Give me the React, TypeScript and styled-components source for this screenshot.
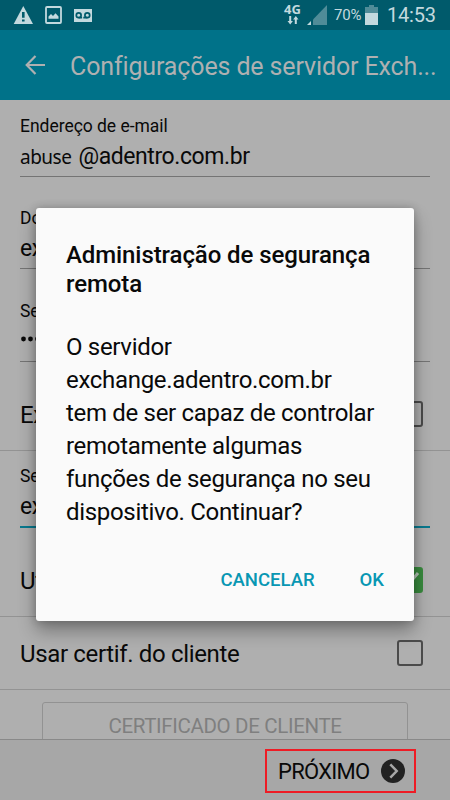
import React from 'react';
import styled, { createGlobalStyle } from 'styled-components';

const GlobalStyle = createGlobalStyle`
  * { box-sizing: border-box; }
  body { margin: 0; background: #afafaf; font-family: Roboto, 'Noto Sans', sans-serif; color: #090909; }
  h1, h2, p { margin: 0; font-weight: 400; }
  button { border: 0; padding: 0; background: none; font: inherit; color: inherit; }
  svg { display: block; flex: none; }
`;

const Screen = styled.div`
  position: relative;
  width: 450px;
  height: 800px;
  overflow: hidden;
  display: flex;
  flex-direction: column;
  background: #afafaf;
`;

const StatusBar = styled.header`
  height: 30px;
  flex: none;
  display: flex;
  justify-content: space-between;
  padding: 0 13px;
  background: #005a6b;
  color: #c3d9de;
`;

const StatusGroup = styled.div<{ $gap: number }>`
  display: flex;
  align-items: center;
  gap: ${(p) => p.$gap}px;
`;

const Network = styled.div`
  width: 17px;
  height: 24px;
  display: flex;
  flex-direction: column;
  align-items: center;
  font: 700 13px/13px 'Noto Sans', sans-serif;
  margin-top: -1px;
`;

const Percent = styled.span`
  width: 27px;
  margin-left: 7px;
  font-size: 15px;
  letter-spacing: -0.2px;
  line-height: 30px;
  white-space: nowrap;
`;

const Clock = styled.span`
  width: 50px;
  margin-left: 9px;
  font-size: 20px;
  letter-spacing: -0.2px;
  line-height: 31px;
  white-space: nowrap;
`;

const AppBar = styled.div`
  height: 70px;
  flex: none;
  display: flex;
  align-items: center;
  padding: 0 13px 0 25px;
  gap: 25px;
  background: #007289;
  color: #afb0b1;
`;

const AppTitle = styled.h1`
  flex: 1;
  font-size: 25px;
  line-height: 36px;
  padding-top: 3px;
  letter-spacing: -0.13px;
  white-space: nowrap;
`;

const Form = styled.main`
  flex: 1;
  min-height: 0;
  overflow: hidden;
`;

const Field = styled.div<{ $height: number; $active?: boolean }>`
  height: ${(p) => p.$height}px;
  margin: 0 20px;
  display: flex;
  flex-direction: column;
  justify-content: flex-end;
  border-bottom: ${(p) => (p.$active ? '2px solid #08798e' : '1px solid #747474')};
`;

const FieldLabel = styled.label`
  font-size: 17.5px;
  line-height: 24px;
  letter-spacing: -0.03px;
  white-space: nowrap;
`;

const FieldValue = styled.div`
  height: 38px;
  display: flex;
  align-items: baseline;
  gap: 7px;
  font-size: 23px;
  line-height: 38px;
  letter-spacing: -0.42px;
  white-space: nowrap;
`;

const MailUser = styled.span`
  font-family: 'Noto Sans', sans-serif;
  font-size: 19px;
  letter-spacing: -0.5px;
`;

const OptionRow = styled.div<{ $height: number; $inset?: number }>`
  height: ${(p) => p.$height}px;
  display: flex;
  align-items: center;
  justify-content: space-between;
  padding: ${(p) => p.$inset ?? 0}px 27px 0 20px;
  border-bottom: 1px solid #939393;
  font-size: 24px;
  letter-spacing: -0.35px;
  white-space: nowrap;
`;

const OptionLabel = styled.span`
  padding-top: 2px;
`;

const CheckBox = styled.span<{ $checked?: boolean }>`
  width: 26px;
  height: 26px;
  display: grid;
  place-items: center;
  border-radius: 3px;
  border: 2px solid ${(p) => (p.$checked ? '#398b3e' : '#4b4b4b')};
  background: ${(p) => (p.$checked ? '#398b3e' : 'transparent')};
`;

const CertificateButton = styled.button`
  display: block;
  width: 366px;
  height: 50px;
  margin: 12px 0 0 42px;
  border: 1px solid #929292;
  border-radius: 3px;
  font-size: 20.5px;
  letter-spacing: -0.35px;
  line-height: 44px;
  padding-bottom: 2px;
  color: #7f7f7f;
`;

const Footer = styled.footer`
  height: 61px;
  flex: none;
  display: flex;
  justify-content: flex-end;
  padding: 9px 34px 0 0;
  border-top: 1px solid #898989;
  background: #a7a7a7;
`;

const NextButton = styled.button`
  width: 151px;
  height: 44px;
  display: flex;
  align-items: center;
  justify-content: space-between;
  padding: 0 9px 0 11px;
  border: 2px solid #ee1c25;
  font-size: 22px;
  letter-spacing: -0.7px;
`;

const Dialog = styled.section`
  position: absolute;
  left: 36px;
  top: 208px;
  width: 378px;
  height: 413px;
  padding: 33px 30px 0;
  border-radius: 3px;
  background: #fafafa;
  box-shadow: 0 10px 18px rgba(0, 0, 0, 0.32), 0 0 9px rgba(0, 0, 0, 0.22);
`;

const DialogTitle = styled.h2`
  font-size: 24px;
  font-weight: 500;
  letter-spacing: -0.09px;
  line-height: 29px;
`;

const DialogText = styled.p`
  margin-top: 32px;
  font-size: 24px;
  letter-spacing: -0.31px;
  line-height: 33px;
  white-space: nowrap;
`;

const DialogActions = styled.div`
  display: flex;
  justify-content: flex-end;
  gap: 45px;
  margin-top: 37px;
`;

const DialogButton = styled.button`
  font-size: 18.5px;
  font-weight: 500;
  line-height: 28px;
  color: #0897b3;
`;

export default function App() {
  return (
    <>
      <GlobalStyle />
      <Screen>
        <StatusBar>
          <StatusGroup $gap={12}>
            <svg width="20" height="18" viewBox="0 0 20 18" fill="#c3d9de">
              <path d="M10.3 0 20 18H.7Z" />
              <path d="M9 6h2.6v5.7H9zM9 13.4h2.6v2.2H9z" fill="#005a6b" />
            </svg>
            <svg width="17" height="18" viewBox="0 0 17 18">
              <rect x="1" y="1" width="15" height="16" rx="1" fill="none" stroke="#c3d9de" strokeWidth="1.8" />
              <path d="M3.5 12.8V10.4L6 8l2 2 2.5-2.8 3 3.3v2.3Z" fill="#c3d9de" />
            </svg>
            <svg width="18" height="13" viewBox="0 0 18 13" fill="none">
              <path d="M0 0h18v13H0z" fill="#c3d9de" />
              <g stroke="#005a6b" strokeWidth="1.7">
                <circle cx="4.7" cy="6.2" r="2.4" />
                <circle cx="13.3" cy="6.2" r="2.4" />
                <path d="M4.7 8.7h3.4M9.3 8.7h4" />
              </g>
            </svg>
          </StatusGroup>
          <StatusGroup $gap={0}>
            <Network>
              4G
              <svg width="12" height="9" viewBox="0 0 12 9" fill="#c3d9de">
                <path d="M2.2 0h2v5h1.7L3.2 8.6.5 5h1.7zM7.8 8V3.5H6.1L8.8 0l2.7 3.5H9.8V8z" />
              </svg>
            </Network>
            <svg width="20" height="21" viewBox="0 0 20 21" style={{ marginLeft: 6 }}>
              <path d="M20 0v20H6V14.5Z" fill="#508c98" />
              <path d="M4 16v4H0Z" fill="#c3d9de" />
            </svg>
            <Percent>70%</Percent>
            <svg width="13" height="20" viewBox="0 0 13 20" style={{ marginLeft: 4 }}>
              <path d="M4 0h5v2h4v6H0V2h4z" fill="#508c98" />
              <path d="M0 8h13v12H0z" fill="#c3d9de" />
            </svg>
            <Clock>14:53</Clock>
          </StatusGroup>
        </StatusBar>
        <AppBar>
          <svg width="20" height="20" viewBox="0 0 20 20" fill="none" stroke="#afb0b1" strokeWidth="2.2">
            <path d="M20 10H1.9M10.5 1 1.7 10l8.8 9" />
          </svg>
          <AppTitle>Configurações de servidor Exch...</AppTitle>
        </AppBar>
        <Form>
          <Field $height={77}>
            <FieldLabel>Endereço de e-mail</FieldLabel>
            <FieldValue><MailUser>abuse</MailUser><span>@adentro.com.br</span></FieldValue>
          </Field>
          <Field $height={92}>
            <FieldLabel>Domínio</FieldLabel>
            <FieldValue>ex</FieldValue>
          </Field>
          <Field $height={93}>
            <FieldLabel>Senha</FieldLabel>
            <FieldValue>
              <svg width="48" height="8" viewBox="0 0 48 8" fill="#090909" style={{ alignSelf: 'center', marginBottom: 7 }}>
                {[3.5, 10.5, 17.5, 24.5, 31.5, 38.5].map((x) => <circle key={x} cx={x} cy="4" r="2.4" />)}
              </svg>
            </FieldValue>
          </Field>
          <OptionRow $height={89} $inset={15}>
            <OptionLabel>Exibir</OptionLabel>
            <CheckBox />
          </OptionRow>
          <Field $height={77} $active>
            <FieldLabel>Servidor</FieldLabel>
            <FieldValue>ex</FieldValue>
          </Field>
          <OptionRow $height={89} $inset={15}>
            <OptionLabel>Utilizar SSL</OptionLabel>
            <CheckBox $checked>
              <svg width="22" height="22" viewBox="0 0 22 22" fill="none" stroke="#b5c6b6" strokeWidth="3">
                <path d="m2 10 6 7L19 4" />
              </svg>
            </CheckBox>
          </OptionRow>
          <OptionRow $height={73}>
            <OptionLabel>Usar certif. do cliente</OptionLabel>
            <CheckBox />
          </OptionRow>
          <CertificateButton>CERTIFICADO DE CLIENTE</CertificateButton>
        </Form>
        <Footer>
          <NextButton>
            PRÓXIMO
            <svg width="24" height="24" viewBox="0 0 24 24" fill="none">
              <circle cx="12" cy="12" r="12" fill="#222" />
              <path d="m9.3 5.4 6.4 6.6-6.4 6.6" stroke="#a7a7a7" strokeWidth="2.5" />
            </svg>
          </NextButton>
        </Footer>
        <Dialog>
          <DialogTitle>Administração de segurança<br />remota</DialogTitle>
          <DialogText>
            O servidor<br />exchange.adentro.com.br<br />tem de ser capaz de controlar<br />
            remotamente algumas<br />funções de segurança no seu<br />dispositivo. Continuar?
          </DialogText>
          <DialogActions>
            <DialogButton>CANCELAR</DialogButton>
            <DialogButton>OK</DialogButton>
          </DialogActions>
        </Dialog>
      </Screen>
    </>
  );
}
